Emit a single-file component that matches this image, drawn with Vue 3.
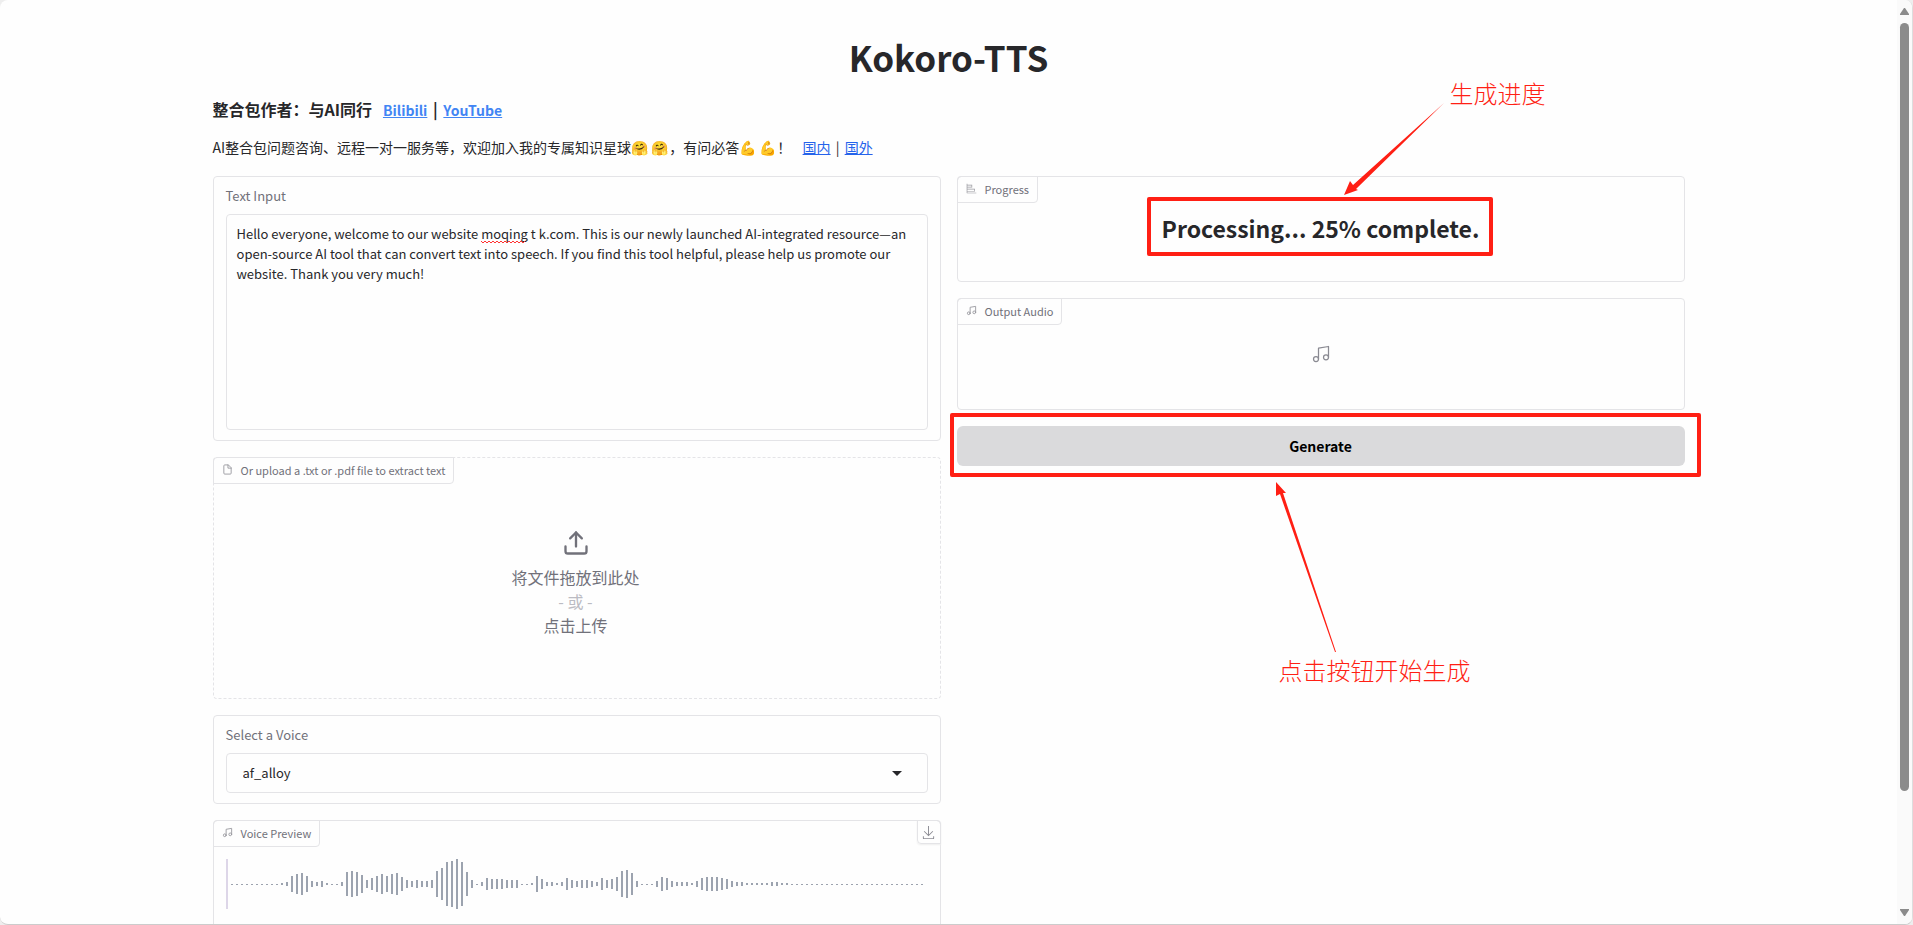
<template>
  <div class="window">
    <main class="page">
      <h1 class="title">Kokoro-TTS</h1>
      <h3 class="author">
        整合包作者：与AI同行 &nbsp; <a href="#">Bilibili</a> | <a href="#">YouTube</a>
      </h3>
      <p class="notice">
        AI整合包问题咨询、远程一对一服务等，欢迎加入我的专属知识星球<span class="emoji">🤗</span>&nbsp;<span
          class="emoji"
          >🤗</span
        >，有问必答<span class="emoji">💪</span>&nbsp;<span class="emoji">💪</span>！ &nbsp;
        <a href="#">国内</a> | <a href="#">国外</a>
      </p>

      <div class="columns">
        <div class="column">
          <section class="card form-card">
            <label class="field-label" for="text-input">Text Input</label>
            <div class="textarea-wrap">
              <textarea id="text-input" v-model="text" spellcheck="false"></textarea>
              <svg class="squiggle" width="46" height="4" viewBox="0 0 46 4">
                <path :d="squigglePath" fill="none" stroke="#f33" stroke-width="1" />
              </svg>
            </div>
          </section>

          <section class="card upload-card">
            <div class="tag">
              <svg class="tag-icon" viewBox="0 0 24 24">
                <path d="M13 2H6a2 2 0 0 0-2 2v16a2 2 0 0 0 2 2h12a2 2 0 0 0 2-2V9z" />
                <path d="M13 2v7h7" />
              </svg>
              Or upload a .txt or .pdf file to extract text
            </div>
            <button class="upload-button" type="button">
              <svg class="upload-icon" viewBox="0 0 24 24">
                <path d="M21 15v4a2 2 0 0 1-2 2H5a2 2 0 0 1-2-2v-4" />
                <path d="M17 8l-5-5-5 5" />
                <path d="M12 3v12" />
              </svg>
              <span>将文件拖放到此处</span>
              <span class="or">- 或 -</span>
              <span>点击上传</span>
            </button>
          </section>

          <section class="card form-card">
            <label class="field-label" for="voice">Select a Voice</label>
            <div class="select-wrap">
              <select id="voice" v-model="voice">
                <option v-for="name in voices" :key="name" :value="name">{{ name }}</option>
              </select>
              <svg class="caret" width="10" height="5" viewBox="0 0 10 5">
                <path d="M0 0h10L5 5z" fill="#27272a" />
              </svg>
            </div>
          </section>

          <section class="card preview-card">
            <div class="tag">
              <svg class="tag-icon" viewBox="0 0 24 24">
                <path d="M9 18V5l12-2v13" />
                <circle cx="6" cy="18" r="3" />
                <circle cx="18" cy="16" r="3" />
              </svg>
              Voice Preview
            </div>
            <button class="download" type="button" aria-label="Download">
              <svg width="15" height="15" viewBox="0 0 32 32">
                <path
                  fill="currentColor"
                  d="M26 24v4H6v-4H4v4a2 2 0 0 0 2 2h20a2 2 0 0 0 2-2v-4zm0-10-1.41-1.41L17 20.17V2h-2v18.17l-7.59-7.58L6 14l10 10l10-10z"
                />
              </svg>
            </button>
            <div class="waveform">
              <span class="cursor"></span>
              <span v-for="(h, i) in bars" :key="i" class="bar" :style="{ height: h + 'px' }"></span>
            </div>
          </section>
        </div>

        <div class="column">
          <section class="card progress-card">
            <div class="tag">
              <svg class="tag-icon filled" viewBox="0 0 32 32">
                <path
                  d="M4 2H2v26a2 2 0 0 0 2 2h26v-2H4v-3h22v-8H4v-4h14V5H4Zm20 17v4H4v-4ZM16 7v4H4V7Z"
                />
              </svg>
              Progress
            </div>
            <h2 class="progress-text">Processing... {{ progress }}% complete.</h2>
            <div class="frame progress-frame"></div>
            <svg class="arrow progress-arrow" width="100" height="92" viewBox="0 0 100 92">
              <path d="M100 0L12 86L14 87L0 92L6 78L9 82Z" fill="#ff1f14" />
            </svg>
            <span class="note progress-note">生成进度</span>
          </section>

          <section class="card audio-card">
            <div class="tag">
              <svg class="tag-icon" viewBox="0 0 24 24">
                <path d="M9 18V5l12-2v13" />
                <circle cx="6" cy="18" r="3" />
                <circle cx="18" cy="16" r="3" />
              </svg>
              Output Audio
            </div>
            <svg class="audio-icon" viewBox="0 0 24 24">
              <path d="M9 18V5l12-2v13" />
              <circle cx="6" cy="18" r="3" />
              <circle cx="18" cy="16" r="3" />
            </svg>
          </section>

          <div class="generate-wrap">
            <button class="generate" type="button">Generate</button>
            <div class="frame generate-frame"></div>
            <svg class="arrow generate-arrow" width="60" height="170" viewBox="0 0 60 170">
              <path d="M59 170L4 12L0 14L0 0L10 11L7 11L60 170Z" fill="#ff1f14" />
            </svg>
            <span class="note generate-note">点击按钮开始生成</span>
          </div>
        </div>
      </div>
    </main>

    <div class="scrollbar">
      <svg width="9" height="7" viewBox="0 0 9 7">
        <path d="M4 0h1l4 6v1H0V6z" fill="#8b8b8b" />
      </svg>
      <div class="track">
        <div class="thumb"></div>
      </div>
      <svg width="9" height="7" viewBox="0 0 9 7">
        <path d="M4 7h1l4-6V0H0v1z" fill="#8b8b8b" />
      </svg>
    </div>
  </div>
</template>

<script setup>
import { ref } from 'vue'

const text = ref(
  'Hello everyone, welcome to our website moqing t k.com. This is our newly launched AI-integrated resource—an open-source AI tool that can convert text into speech. If you find this tool helpful, please help us promote our website. Thank you very much!'
)
const voices = ['af_alloy']
const voice = ref('af_alloy')
const progress = ref(25)

// zigzag under the misspelled word
const squigglePath = 'M0 1' + 'l2 2l2 -2'.repeat(11)

// bar heights in px, left to right
const bars = [
  ...Array(10).fill(1),
  2, 4, 16, 20, 22, 16, 6, 4, 6, 2, 1, 1, 4, 24, 26, 24, 18, 8, 12, 16, 20, 16, 20, 22, 14, 8, 6,
  8, 6, 6, 8, 26, 32, 44, 46, 50, 44, 24, 8, 1, 4, 12, 10, 10, 10, 8, 8, 8, 1, 1, 2, 16, 10, 4, 4,
  2, 4, 12, 8, 6, 8, 8, 6, 4, 12, 8, 10, 14, 26, 28, 22, 6, 1, 1, 1, 6, 14, 12, 6, 4, 4, 4, 2, 6,
  12, 14, 14, 14, 12, 10, 6, 4, 4, 2, 2, 2, 2, 2, 4, 4, 2, 2,
  ...Array(27).fill(1)
]
</script>

<style>
body {
  background: #eee;
}
</style>

<style scoped>
* {
  box-sizing: border-box;
}

.window {
  display: flex;
  height: 100vh;
  overflow: hidden;
  background: #fefefe;
  border-right: 1px solid #ddd;
  border-bottom: 1px solid #ccc;
  border-radius: 8px;
  font-family: 'Noto Sans CJK SC', sans-serif;
  font-size: 14px;
  line-height: 20px;
  color: #27272a;
}

button,
select,
textarea {
  font: inherit;
  color: inherit;
}

.page {
  flex: 1;
  min-width: 0;
  max-width: 1536px;
  margin: 0 auto;
  padding: 30px 32px 0;
}

.title {
  margin: 0;
  font-size: 35px;
  line-height: 54px;
  font-weight: 600;
  text-align: center;
}

.author {
  margin: 13px 0 0;
  font-size: 16px;
  line-height: 24px;
  font-weight: 600;
}

.author a {
  margin: 0 2px;
  font-size: 14px;
  color: #4285f4;
}

.author a:first-child {
  margin-left: 0;
}

.notice {
  margin: 15px 0 18px;
}

.notice a {
  margin: 0 2px;
  color: #2563eb;
}

.emoji {
  font-family: 'Noto Color Emoji', sans-serif;
}

.columns {
  display: flex;
  gap: 16px;
}

.column {
  flex: 1;
  min-width: 0;
  display: flex;
  flex-direction: column;
  gap: 16px;
}

.card {
  position: relative;
  border: 1px solid #e4e4e7;
  border-radius: 4px;
}

.form-card {
  padding: 10px 12px;
}

.field-label {
  display: block;
  margin-bottom: 9px;
  font-size: 13px;
  line-height: 18px;
  color: #71717a;
}

.textarea-wrap,
.select-wrap {
  position: relative;
}

textarea {
  display: block;
  width: 100%;
  height: 216px;
  padding: 9px 10px;
  border: 1px solid #e4e4e7;
  border-radius: 4px;
  background: transparent;
  font-size: 13px;
  resize: none;
  outline: none;
}

.squiggle {
  position: absolute;
  left: 255px;
  top: 26px;
}

.tag {
  position: absolute;
  top: -1px;
  left: -1px;
  display: flex;
  align-items: center;
  gap: 8px;
  height: 27px;
  padding: 0 8px 2px;
  border: 1px solid #e4e4e7;
  border-radius: 4px 0;
  font-size: 11px;
  color: #71717a;
}

.tag-icon,
.upload-icon,
.audio-icon {
  fill: none;
  stroke: currentColor;
  stroke-width: 2;
  stroke-linecap: round;
  stroke-linejoin: round;
}

.tag-icon {
  width: 11px;
  height: 11px;
  opacity: 0.7;
}

.tag-icon.filled {
  fill: currentColor;
  stroke: none;
}

.upload-card {
  border-style: dashed;
}

.upload-button {
  display: flex;
  flex-direction: column;
  align-items: center;
  justify-content: center;
  width: 100%;
  height: 240px;
  padding: 10px 2px 0 0;
  border: none;
  background: none;
  font-size: 16px;
  line-height: 24px;
  color: #71717a;
}

.upload-icon {
  width: 28px;
  height: 28px;
  margin-bottom: 8px;
}

.or {
  color: #bbbbc2;
}

select {
  display: block;
  width: 100%;
  height: 40px;
  padding: 0 16px;
  border: 1px solid #e4e4e7;
  border-radius: 4px;
  background: transparent;
  font-size: 13px;
  appearance: none;
}

.caret {
  position: absolute;
  right: 26px;
  top: 18px;
}

.preview-card {
  height: 180px;
  padding: 38px 12px 0;
}

.download {
  position: absolute;
  top: -1px;
  right: -1px;
  display: flex;
  align-items: center;
  justify-content: center;
  width: 24px;
  height: 24px;
  padding: 0;
  border: 1px solid #e4e4e7;
  border-radius: 0 4px;
  background: none;
  box-shadow: 0 1px 2px #eee;
  color: #8a8a92;
}

.waveform {
  display: flex;
  align-items: center;
  gap: 3px;
  height: 50px;
}

.cursor,
.bar {
  flex: none;
  width: 2px;
}

.cursor {
  height: 50px;
  background: #ddd6e8;
}

.bar {
  background: #9ca3af;
}

.progress-card {
  height: 106px;
}

.progress-text {
  margin: 33px 0 0;
  font-size: 23px;
  line-height: 36px;
  font-weight: 600;
  text-align: center;
}

.audio-card {
  display: flex;
  align-items: center;
  justify-content: center;
  height: 112px;
}

.audio-icon {
  width: 20px;
  height: 20px;
  stroke-width: 1.5;
  color: #8a8a92;
}

.generate-wrap {
  position: relative;
}

.generate {
  display: block;
  width: 100%;
  height: 40px;
  border: none;
  border-radius: 6px;
  background: #dadadc;
  font-weight: 600;
  color: #000;
}

/* red call-outs drawn over the right column */
.frame {
  position: absolute;
  border: 4px solid #ff1f14;
  border-radius: 2px;
  pointer-events: none;
}

.arrow,
.note {
  position: absolute;
  pointer-events: none;
}

.note {
  font-size: 24px;
  line-height: 32px;
  font-weight: 300;
  color: #ff1f14;
  white-space: nowrap;
}

.progress-frame {
  top: 20px;
  left: calc(50% - 174px);
  width: 346px;
  height: 59px;
}

.progress-arrow {
  top: -74px;
  left: calc(50% + 23px);
}

.progress-note {
  top: -100px;
  left: calc(50% + 129px);
}

.generate-frame {
  top: -13px;
  right: -16px;
  bottom: -11px;
  left: -7px;
}

.generate-arrow {
  top: 56px;
  left: calc(50% - 45px);
}

.generate-note {
  top: 228px;
  left: calc(50% - 42px);
}

.scrollbar {
  display: flex;
  flex-direction: column;
  align-items: center;
  gap: 8px;
  width: 15px;
  padding: 8px 0;
  background: #fafafa;
}

.track {
  flex: 1;
}

.thumb {
  width: 9px;
  height: calc(100% * 7 / 8);
  border-radius: 5px;
  background: #8b8b8b;
}
</style>
